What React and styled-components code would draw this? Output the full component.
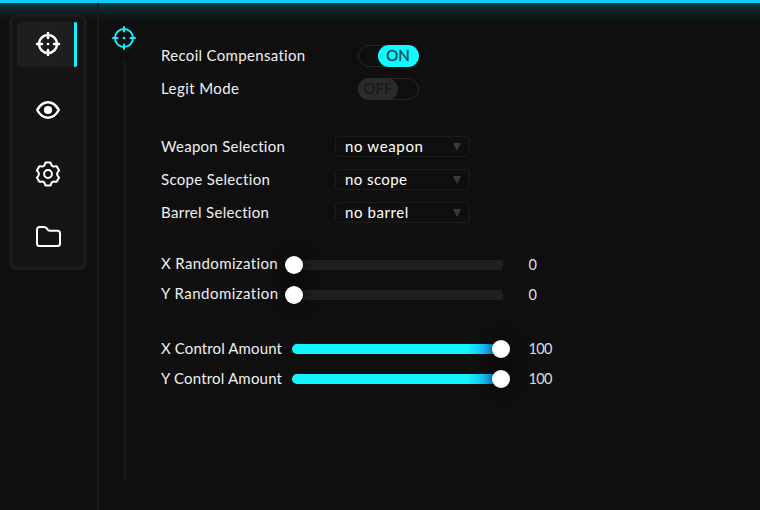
import React from "react";
import styled, { createGlobalStyle, css } from "styled-components";

const Global = createGlobalStyle`
  * { box-sizing: border-box; }
  body { margin: 0; background: #0f0f0f; overflow: hidden; }
`;

const Window = styled.div`
  width: 760px;
  height: 510px;
  display: flex;
  border-top: 3px solid #12cdff;
  background: linear-gradient(180deg, #13444e 0, #112a2f 5px, #101a1c 11px, #0f0f0f 21px);
  color: #f0f0f0;
  font: 15px/20px Lato, "Liberation Sans", sans-serif;
  overflow: hidden;
`;

const Sidebar = styled.aside`
  flex: none;
  width: 99px;
  padding: 11px 0 0 9px;
  border-right: 2px solid #191919;
`;

const NavCard = styled.nav`
  width: 78px;
  height: 256px;
  padding: 5px;
  border: 3px solid #1c1c1c;
  border-radius: 8px;
  background: #151515;
  display: flex;
  flex-direction: column;
`;

const NavItem = styled.button`
  width: 61px;
  height: 45px;
  margin: 0 0 ${(p) => p.$gap || 0}px;
  padding: 0 0 1px 1px;
  border: 0;
  border-radius: 4px;
  display: flex;
  align-items: center;
  justify-content: center;
  color: #fff;
  background: transparent;
  ${(p) =>
    p.$active &&
    css`
      background: linear-gradient(90deg, #1e1e1e 57px, #13f0ff 57px 60px, transparent 60px);
    `}
`;

const Icon = styled.svg`
  display: block;
  flex: none;
  overflow: visible;
  fill: none;
  stroke: currentColor;
  stroke-width: ${(p) => p.$stroke || 2}px;
  stroke-linecap: round;
  stroke-linejoin: round;
`;

const Rail = styled.div`
  flex: none;
  width: 62px;
  padding: 23px 0 0 13px;
  color: #13f0ff;
`;

const RailLine = styled.div`
  width: 2px;
  height: 419px;
  margin: 11px 0 0 12px;
  background: #191919;
`;

const Settings = styled.main`
  padding-top: 42px;
  display: flex;
  flex-direction: column;
`;

const Group = styled.section`
  margin-bottom: ${(p) => p.$after || 0}px;
`;

const Row = styled.div`
  height: ${(p) => p.$height}px;
  display: flex;
  align-items: flex-start;
`;

const Label = styled.label`
  flex: none;
  width: ${(p) => p.$width}px;
  white-space: nowrap;
  letter-spacing: ${(p) => p.$track || 0}px;
`;

const Toggle = styled.div`
  width: 61px;
  height: 22px;
  border: 1px solid #272727;
  border-radius: 11px;
  display: flex;
  justify-content: ${(p) => (p.$on ? "flex-end" : "flex-start")};
`;

const ToggleThumb = styled.div`
  width: ${(p) => (p.$on ? 41 : 40)}px;
  height: 22px;
  margin: -1px;
  padding-right: ${(p) => (p.$on ? 1 : 0)}px;
  border-radius: 11px;
  background: ${(p) => (p.$on ? "#13f8ff" : "#2b2b2b")};
  color: ${(p) => (p.$on ? "#0d4b58" : "#191919")};
  -webkit-text-stroke: ${(p) => (p.$on ? 0.35 : 0.1)}px currentColor;
  text-align: center;
  line-height: 21px;
`;

const Select = styled.div`
  width: 135px;
  height: 21px;
  padding: 0 8px 0 9px;
  border: 1px solid #1c1c1c;
  border-radius: 4px;
  display: flex;
  align-items: center;
  justify-content: space-between;
  letter-spacing: ${(p) => p.$track || 0}px;
  line-height: 18px;
  color: #fff;
`;

const SelectText = styled.span`
  padding-bottom: 1px;
`;

const Arrow = styled.i`
  border: solid transparent;
  border-width: 8px 4.5px 0;
  border-top-color: #3a3a3a;
`;

const Track = styled.div`
  width: 211px;
  height: 10px;
  margin-top: ${(p) => (p.$full ? 6 : 7)}px;
  border-radius: ${(p) => (p.$full ? 5 : 3)}px;
  display: flex;
  align-items: center;
  justify-content: ${(p) => (p.$full ? "flex-end" : "flex-start")};
  background: ${(p) =>
    p.$full ? "linear-gradient(90deg, #13f4ff 175px, #13b8f8 195px, #1378e0 205px)" : "#1f1f1f"};
`;

const Knob = styled.div`
  width: 18px;
  height: 18px;
  margin: 0 ${(p) => (p.$full ? -7 : 0)}px 0 ${(p) => (p.$full ? 0 : -7)}px;
  border-radius: 50%;
  background: #fff;
  box-shadow: 0 0 12px 4px rgba(0, 0, 0, 0.35);
`;

const Value = styled.output`
  margin: ${(p) => (p.$full ? 1 : 2)}px 0 0 25.5px;
  color: #dedede;
  font-size: 14.5px;
  letter-spacing: -0.6px;
`;

const Crosshair = ({ stroke, tick }) => (
  <Icon width="24" height="24" viewBox="0 0 24 24" $stroke={stroke}>
    <circle cx="12" cy="12" r="9" />
    <path d={`M12 1v${tick}M12 23v-${tick}M1 12h${tick}M23 12h-${tick}`} />
    <circle cx="12" cy="12" r="1.3" fill="currentColor" stroke="none" />
  </Icon>
);

const Eye = () => (
  <Icon width="24" height="18" viewBox="0 0 24 18" $stroke={2.5}>
    <path d="M1.2 9C4 4 7.5 1.3 12 1.3S20 4 22.8 9C20 14 16.5 16.7 12 16.7S4 14 1.2 9Z" />
    <circle cx="12" cy="9" r="4.1" fill="currentColor" stroke="none" />
  </Icon>
);

const tooth = [[-4.4, -7.9], [-3.4, -9], [-2.5, -11.4], [2.5, -11.4], [3.4, -9]];
const gearPath = `M${[0, 1, 2, 3, 4, 5]
  .flatMap((i) => {
    const a = (i * Math.PI) / 3;
    return tooth.map(([x, y]) =>
      `${(x * Math.cos(a) - y * Math.sin(a)).toFixed(2)} ${(x * Math.sin(a) + y * Math.cos(a)).toFixed(2)}`
    );
  })
  .join("L")}Z`;

const Gear = () => (
  <Icon width="26" height="26" viewBox="-13 -13 26 26" $stroke={2}>
    <path d={gearPath} />
    <circle r="3.9" />
  </Icon>
);

const Folder = () => (
  <Icon width="25" height="21" viewBox="0 0 25 21" $stroke={2}>
    <path d="M1 3.5A2.5 2.5 0 0 1 3.5 1H8Q9.5 1 10.5 2.2L12 4Q12.7 4.7 14 4.7H21.5A2.5 2.5 0 0 1 24 7.2V17.5A2.5 2.5 0 0 1 21.5 20H3.5A2.5 2.5 0 0 1 1 17.5Z" />
  </Icon>
);

const toggles = [
  { label: "Recoil Compensation", on: true, track: 0.32 },
  { label: "Legit Mode", on: false, track: 0.42 },
];
const selects = [
  { label: "Weapon Selection", value: "no weapon", track: 0.28, valueTrack: 0.65 },
  { label: "Scope Selection", value: "no scope", track: 0.33, valueTrack: 0.42 },
  { label: "Barrel Selection", value: "no barrel", track: 0.3, valueTrack: 0.57 },
];
const sliders = [
  [
    { label: "X Randomization", value: 0, track: 0.37 },
    { label: "Y Randomization", value: 0, track: 0.47 },
  ],
  [
    { label: "X Control Amount", value: 100, track: 0.12 },
    { label: "Y Control Amount", value: 100, track: 0.19 },
  ],
];

export default function App() {
  return (
    <>
      <Global />
      <Window>
        <Sidebar>
          <NavCard>
            <NavItem $active $gap={21}><Crosshair stroke={2.5} tick={5} /></NavItem>
            <NavItem $gap={19}><Eye /></NavItem>
            <NavItem $gap={17}><Gear /></NavItem>
            <NavItem><Folder /></NavItem>
          </NavCard>
        </Sidebar>
        <Rail>
          <Crosshair stroke={2} tick={4.5} />
          <RailLine />
        </Rail>
        <Settings>
          <Group $after={25}>
            {toggles.map((t) => (
              <Row key={t.label} $height={33}>
                <Label $width={197} $track={t.track}>{t.label}</Label>
                <Toggle $on={t.on}>
                  <ToggleThumb $on={t.on}>{t.on ? "ON" : "OFF"}</ToggleThumb>
                </Toggle>
              </Row>
            ))}
          </Group>
          <Group $after={18}>
            {selects.map((s) => (
              <Row key={s.label} $height={33}>
                <Label $width={174} $track={s.track}>{s.label}</Label>
                <Select $track={s.valueTrack}>
                  <SelectText>{s.value}</SelectText>
                  <Arrow />
                </Select>
              </Row>
            ))}
          </Group>
          {sliders.map((group) => (
            <Group key={group[0].label} $after={25}>
              {group.map((s) => (
                <Row key={s.label} $height={30}>
                  <Label $width={131} $track={s.track}>{s.label}</Label>
                  <Track $full={s.value === 100}><Knob $full={s.value === 100} /></Track>
                  <Value $full={s.value === 100}>{s.value}</Value>
                </Row>
              ))}
            </Group>
          ))}
        </Settings>
      </Window>
    </>
  );
}
